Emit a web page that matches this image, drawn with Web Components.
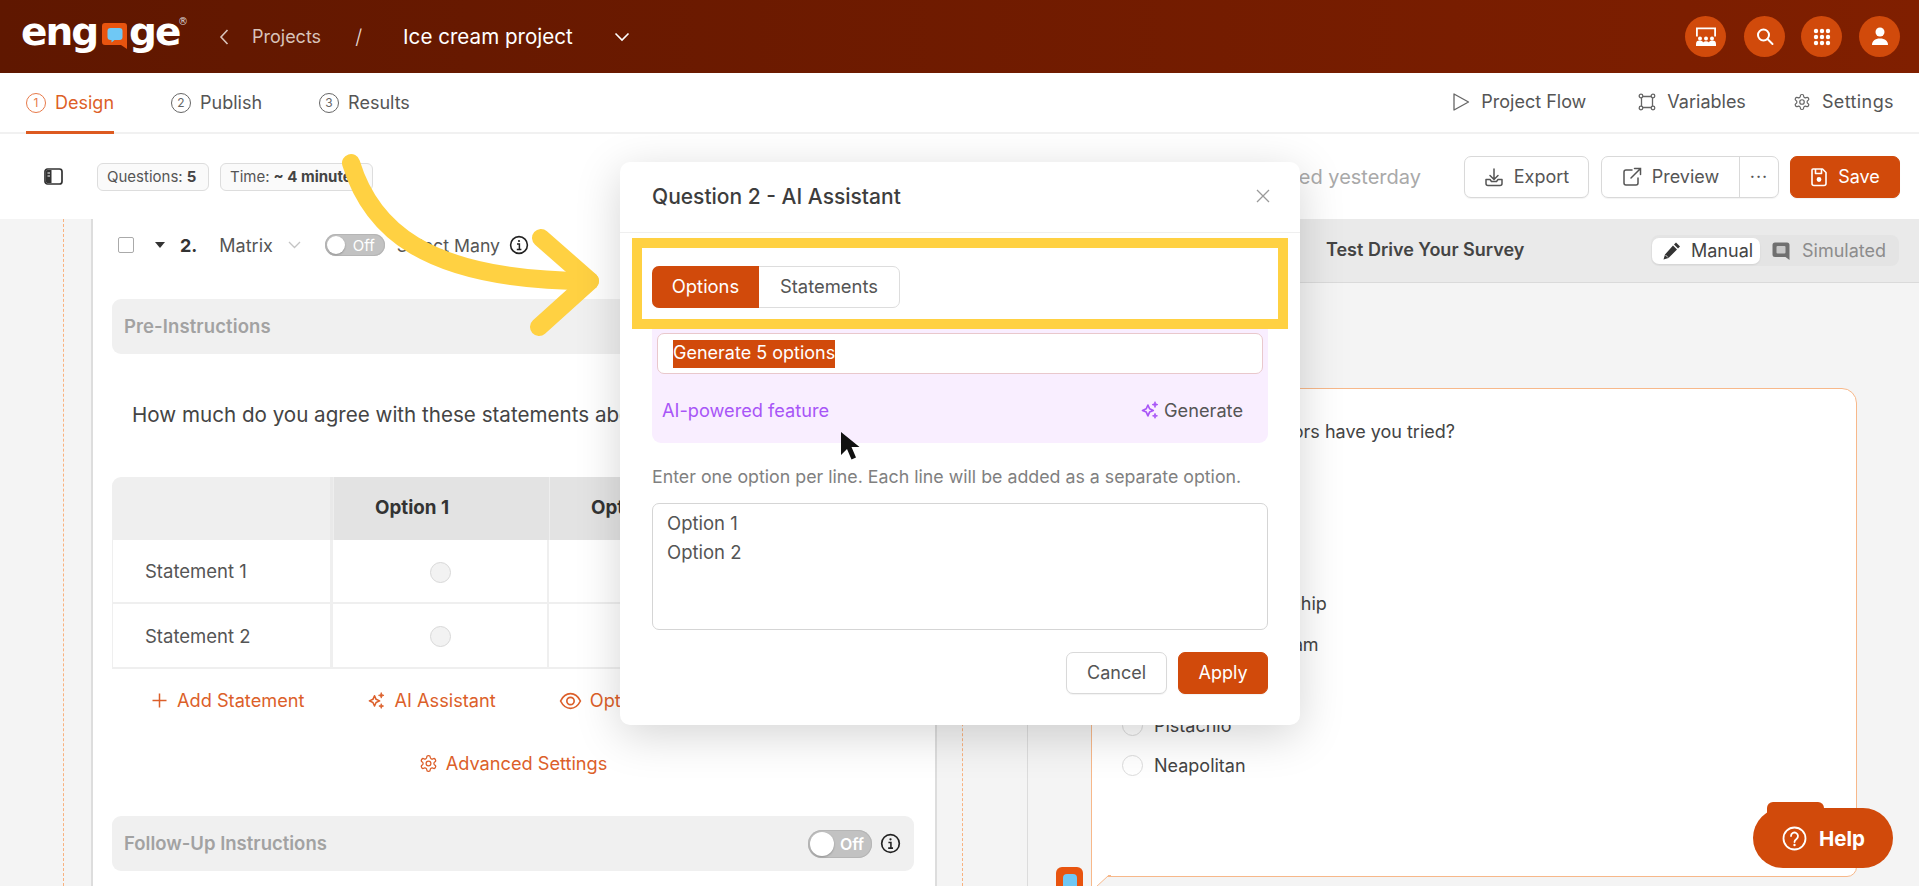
<!DOCTYPE html>
<html lang="en"><head><meta charset="utf-8"><title>Engage</title>
<style>
html,body{margin:0;padding:0;height:886px;overflow:hidden;font-family:Inter,"Noto Sans",sans-serif;color:#444;background:#f4f4f4}
eng-app{height:886px}
</style></head><body>
<eng-app></eng-app>
<script>
const I={
 gear:'<svg viewBox="0 0 24 24" width="100%" height="100%" fill="none" stroke="currentColor" stroke-width="1.6" stroke-linejoin="round"><path d="M12.22 2h-.44a2 2 0 0 0-2 2v.18a2 2 0 0 1-1 1.73l-.43.25a2 2 0 0 1-2 0l-.15-.08a2 2 0 0 0-2.73.73l-.22.38a2 2 0 0 0 .73 2.73l.15.1a2 2 0 0 1 1 1.72v.51a2 2 0 0 1-1 1.74l-.15.09a2 2 0 0 0-.73 2.73l.22.38a2 2 0 0 0 2.73.73l.15-.08a2 2 0 0 1 2 0l.43.25a2 2 0 0 1 1 1.73V20a2 2 0 0 0 2 2h.44a2 2 0 0 0 2-2v-.18a2 2 0 0 1 1-1.73l.43-.25a2 2 0 0 1 2 0l.15.08a2 2 0 0 0 2.73-.73l.22-.39a2 2 0 0 0-.73-2.73l-.15-.08a2 2 0 0 1-1-1.74v-.5a2 2 0 0 1 1-1.74l.15-.09a2 2 0 0 0 .73-2.73l-.22-.38a2 2 0 0 0-2.73-.73l-.15.08a2 2 0 0 1-2 0l-.43-.25a2 2 0 0 1-1-1.73V4a2 2 0 0 0-2-2z"/><circle cx="12" cy="12" r="3"/></svg>',
 spark:'<svg viewBox="0 0 24 24" width="100%" height="100%" fill="none" stroke="currentColor" stroke-width="2" stroke-linejoin="round"><path d="M9.5 6l2 4.5 4.5 2-4.5 2-2 4.5-2-4.5-4.5-2 4.5-2z"/><path fill="currentColor" stroke-width="1" d="M18 2l.9 2.6 2.6.9-2.6.9L18 9l-.9-2.6-2.6-.9 2.6-.9zM18 16l.8 2.2 2.2.8-2.2.8L18 22l-.8-2.2-2.2-.8 2.2-.8z"/></svg>',
 info:'<svg viewBox="0 0 20 20" width="100%" height="100%" fill="none" stroke="#222" stroke-width="1.6"><circle cx="10" cy="10" r="8.4"/><path d="M8 9h2.4v5M7.8 14.4h4.6" stroke-width="1.5"/><circle cx="10" cy="6" r="1.1" fill="#222" stroke="none"/></svg>'
};
function def(name,css,html){
 customElements.define(name,class extends HTMLElement{
  constructor(){super();this.attachShadow({mode:'open'}).innerHTML='<style>'+css+'</style>'+(typeof html==='function'?html(this):html);}
 });
}
def('eng-toggle',`:host{display:inline-flex;align-items:center;width:var(--w,60px);height:var(--h,26px);border-radius:14px;background:#c2c2c2;box-sizing:border-box;padding:2px;box-shadow:inset 0 0 0 1px #b5b5b5;color:#fff;font-size:16px}
 i{width:calc(var(--h,26px) - 4px);height:calc(var(--h,26px) - 4px);border-radius:50%;background:#fff;flex:none;box-shadow:0 1px 2px rgba(0,0,0,.25)}
 span{flex:1;text-align:center;line-height:1}`,`<i></i><span>Off</span>`);
def('eng-radio',`:host{display:inline-block;width:21px;height:21px;border-radius:50%;border:1px solid var(--b,#d8d8d8);background:var(--bg,#f2f2f2);box-sizing:border-box;flex:none}`,``);
def('eng-icobtn',`:host{display:flex;align-items:center;justify-content:center;width:41px;height:41px;border-radius:50%;background:#d14a0b;color:#fff}
 ::slotted(svg){display:block}`,`<slot></slot>`);
def('eng-logo',`:host{display:flex;align-items:flex-start;height:73px;color:#fff;font:700 39px/1 "DejaVu Sans",sans-serif;position:relative;width:170px;letter-spacing:-2px}
 .t{position:absolute;top:9px;line-height:46px}
 .b{position:absolute;left:81px;top:23px;width:25px;height:27px}
 sup{position:absolute;left:157px;top:15px;font:400 10px/14px "DejaVu Sans",sans-serif;letter-spacing:0;width:10px;height:14px;display:flex;align-items:center;justify-content:center;color:#ddd}`,
 `<span class="t" style="left:0">eng</span>
 <svg class="b" viewBox="0 0 25 27"><path d="M3 0h19a3 3 0 0 1 3 3v23l-6-4H3a3 3 0 0 1-3-3V3a3 3 0 0 1 3-3z" fill="#e8540f"/><path d="M8.500 5h9a3 3 0 0 1 3 3v6a3 3 0 0 1-3 3h-5l-3 2.500V17h-1a3 3 0 0 1-3-3V8a3 3 0 0 1 3-3z" fill="#6fc8f5"/></svg>
 <span class="t" style="left:108px">ge</span><sup>®</sup>`);
def('eng-header',`:host{display:flex;align-items:center;height:73px;flex:none;background:linear-gradient(90deg,#5f1700,#801f00);color:#fff;padding:0 19px 0 21px;box-sizing:border-box}
 eng-logo{margin-right:27px}
 .c{margin-right:22px;display:block}
 .p{color:#d8c3ba;font-size:18px}
 .s{color:#e8dcd6;font-size:20px;margin:0 41px 0 34px;font-weight:300}
 .n{font-size:20.6px;font-weight:400}
 .d{margin-left:41px;display:block}
 .sp{flex:1}
 .r{display:flex;gap:17px}`,
 `<eng-logo></eng-logo>
 <svg class="c" width="12" height="20" viewBox="0 0 12 20" fill="none" stroke="#d8c3ba" stroke-width="1.6"><path d="M9.5 3L3 10l6.5 7"/></svg>
 <span class="p">Projects</span><span class="s">/</span><span class="n">Ice cream project</span>
 <svg class="d" width="16" height="10" viewBox="0 0 16 10" fill="none" stroke="#fff" stroke-width="1.6"><path d="M1.5 1.5L8 8l6.5-6.5"/></svg>
 <span class="sp"></span>
 <div class="r">
 <eng-icobtn><svg width="24" height="24" viewBox="0 0 24 24" fill="#fff"><path d="M2 2.5h20v9h-1.800V4.300H3.800v7.200H2z"/><circle cx="6" cy="13.500" r="2"/><circle cx="12" cy="13.500" r="2"/><circle cx="18" cy="13.500" r="2"/><path d="M2 19a3 2.800 0 0 1 7.300 0v2H2zM8.700 19a3.300 2.800 0 0 1 6.600 0v2H8.700zM14.700 19a3 2.800 0 0 1 7.300 0v2h-7.300z"/></svg></eng-icobtn>
 <eng-icobtn style="margin-left:1px"><svg width="20" height="20" viewBox="0 0 20 20" fill="none" stroke="#fff" stroke-width="2"><circle cx="8.500" cy="8" r="5.500"/><path d="M12.500 12l5 5" stroke-linecap="round"/></svg></eng-icobtn>
 <eng-icobtn style="margin-left:-1px"><svg width="18" height="18" viewBox="0 0 18 18" fill="#fff"><circle cx="3" cy="3" r="2.200"/><circle cx="9" cy="3" r="2.200"/><circle cx="15" cy="3" r="2.200"/><circle cx="3" cy="9" r="2.200"/><circle cx="9" cy="9" r="2.200"/><circle cx="15" cy="9" r="2.200"/><circle cx="3" cy="15" r="2.200"/><circle cx="9" cy="15" r="2.200"/><circle cx="15" cy="15" r="2.200"/></svg></eng-icobtn>
 <eng-icobtn><svg width="20" height="22" viewBox="0 0 20 22" fill="#fff"><circle cx="10" cy="6" r="4.500"/><path d="M2 19c0-4 3-6.500 8-6.500s8 2.500 8 6.500z"/></svg></eng-icobtn>
 </div>`);
def('eng-tab',`:host{display:flex;align-items:center;gap:9px;height:61px;box-sizing:border-box;font-size:18px;color:#555;position:relative;--c:#666}
 :host([active]){color:#dd5f27;--c:#e77a4a}
 :host([active])::after{content:"";position:absolute;left:0;right:0;bottom:-1px;height:3px;background:#dd5a20}
 b{display:flex;align-items:center;justify-content:center;width:18px;height:18px;border:1px solid var(--c);border-radius:50%;font-size:12px;font-weight:400;color:var(--c)}`,
 t=>`<b>${t.getAttribute('n')}</b><slot></slot>`);
def('eng-link',`:host{display:flex;align-items:center;gap:11px;font-size:18px;color:#555}
 span{width:18px;height:18px;display:block;color:#666}`,t=>`<span><slot name="i"></slot></span><slot></slot>`);
def('eng-tabs',`:host{display:flex;align-items:center;height:61px;flex:none;background:#fff;border-bottom:2px solid #f1f1f1;padding:0 25px 0 26px;position:relative;z-index:1;box-sizing:border-box}
 .l{display:flex;gap:57px}.sp{flex:1}.r{display:flex;margin-top:-2px}`,
 `<div class="l"><eng-tab n="1" active>Design</eng-tab><eng-tab n="2">Publish</eng-tab><eng-tab n="3">Results</eng-tab></div><span class="sp"></span>
 <div class="r">
 <eng-link style="margin-right:52px"><svg slot="i" viewBox="0 0 18 18" width="18" height="18" fill="none" stroke="currentColor" stroke-width="1.300" stroke-linejoin="round"><path d="M2 1l14.500 8L2 17z"/></svg>Project Flow</eng-link>
 <eng-link style="margin-right:47px"><svg slot="i" viewBox="0 0 18 18" width="18" height="18" fill="none" stroke="currentColor" stroke-width="1.300"><path d="M3.500 3.500h11v11h-11z"/><circle cx="3" cy="3" r="1.800" fill="#fff"/><circle cx="15" cy="3" r="1.800" fill="#fff"/><circle cx="3" cy="15" r="1.800" fill="#fff"/><circle cx="15" cy="15" r="1.800" fill="#fff"/></svg>Variables</eng-link>
 <eng-link style="letter-spacing:.4px"><span slot="i">${I.gear}</span>Settings</eng-link>
 </div>`);
def('eng-chip',`:host{display:inline-flex;align-items:center;height:28px;padding:0 9px;border:1px solid #ddd;border-radius:6px;background:#fafafa;font-size:15px;color:#555;box-sizing:border-box;white-space:nowrap;overflow:hidden}
 ::slotted(b){font-weight:700;color:#444;margin-left:4px}`,`<slot></slot>`);
def('eng-btn',`:host{display:inline-flex;align-items:center;justify-content:center;gap:10px;height:42px;border:1px solid #d9d9d9;border-radius:7px;background:#fff;font-size:18px;color:#555;box-sizing:border-box;padding:0 12px;box-shadow:0 1px 1px rgba(0,0,0,.05)}
 :host([primary]){background:#d14a0b;border-color:#d14a0b;color:#fff}
 ::slotted(svg){display:block;flex:none}`,`<slot></slot>`);
def('eng-toolbar',`:host{display:flex;align-items:center;height:85px;flex:none;background:#fff;padding:0 19px 0 44px;box-sizing:border-box}
 svg.side{display:block;margin-right:34px}
 .chips{display:flex;gap:11px}
 .sp{flex:1}
 .saved{color:#a9a9a9;font-size:20px;margin-right:43px}
 .r{display:flex;gap:12px;align-items:center}
 .pv{display:flex;width:178px;border:1px solid #d9d9d9;border-radius:7px;height:42px;box-sizing:border-box;font-size:18px;color:#555;box-shadow:0 1px 1px rgba(0,0,0,.05)}
 .pv div{display:flex;align-items:center;gap:10px;width:137px;justify-content:center;border-right:1px solid #d9d9d9}
 .pv span{flex:1;display:flex;align-items:center;justify-content:center;letter-spacing:1px}`,
 `<svg class="side" width="19" height="17" viewBox="0 0 19 17" fill="none"><rect x="1" y="1" width="17" height="15" rx="2.500" stroke="#333" stroke-width="1.700"/><path d="M3 2h4.500v13H3a1.500 1.500 0 0 1-1-1V3a1 1 0 0 1 1-1z" fill="#333"/><path d="M3.500 5h2.500M3.500 8h2.500" stroke="#fff"/></svg>
 <div class="chips"><eng-chip style="width:112px">Questions: <b>5</b></eng-chip><eng-chip style="width:153px">Time: <b>~ 4 minutes</b></eng-chip></div>
 <span class="sp"></span><span class="saved">Last saved yesterday</span>
 <div class="r">
 <eng-btn style="width:125px"><svg width="20" height="20" viewBox="0 0 20 20" fill="none" stroke="#555" stroke-width="1.500" stroke-linecap="round" stroke-linejoin="round"><path d="M10 2v10M6 8.500l4 4 4-4M2 12.500v4a2 2 0 0 0 2 2h12a2 2 0 0 0 2-2v-4h-4l-1.500 2h-5L6 12.500z"/></svg>Export</eng-btn>
 <div class="pv"><div><svg width="20" height="20" viewBox="0 0 20 20" fill="none" stroke="#555" stroke-width="1.500" stroke-linecap="round"><path d="M10 3H4a2 2 0 0 0-2 2v11a2 2 0 0 0 2 2h10a2 2 0 0 0 2-2v-5M12.500 1.500H18.500V7.500M18 2L9 11"/></svg>Preview</div><span>···</span></div>
 <eng-btn primary style="width:110px;margin-left:-1px"><svg width="18" height="20" viewBox="0 0 18 20" fill="none" stroke="#fff" stroke-width="1.600" stroke-linejoin="round"><path d="M3 2h9.500L16 5.500V16.500a2 2 0 0 1-2 2H4a2 2 0 0 1-2-2V3a1 1 0 0 1 1-1z"/><path d="M5.500 2v4.500h6V2"/><circle cx="9" cy="12.500" r="1.600" fill="#fff"/></svg>Save</eng-btn>
 </div>`);
def('eng-instr',`:host{display:flex;align-items:center;height:55px;border-radius:9px;background:#f0f0f0;padding:0 12px;box-sizing:border-box;color:#a2a2a2;font-weight:600;font-size:18.5px}
 .sp{flex:1}
 .t{position:relative;top:-1px}
 ::slotted(*){flex:none}`,`<span class="t"><slot></slot></span><span class="sp"></span><slot name="r"></slot>`);
def('eng-matrix',`:host{display:grid;grid-template-columns:221px 216px 1fr;grid-template-rows:63px 64px 65px;font-size:18.5px;color:#555;box-sizing:border-box}
 .h{background:#e3e3e3;display:flex;align-items:center;padding-left:41px;font-weight:700;font-size:18.8px;color:#333;border-left:1px solid #eee;padding-bottom:2px;box-sizing:border-box}
 .h0{background:#efefef;border-radius:9px 0 0 0;border-right:3px solid #e9e9e9;}
 .c{display:flex;align-items:center;justify-content:center;border-bottom:2px solid #efefef;border-right:2px solid #efefef;box-sizing:border-box}
 .c eng-radio{margin-top:2px}
 .s{justify-content:flex-start;padding-left:32px;border-left:1px solid #efefef;border-right:3px solid #efefef}`,
 `<div class="h0"></div><div class="h">Option 1</div><div class="h">Option 2</div>
 <div class="c s">Statement 1</div><div class="c"><eng-radio></eng-radio></div><div class="c"><eng-radio></eng-radio></div>
 <div class="c s">Statement 2</div><div class="c"><eng-radio></eng-radio></div><div class="c"><eng-radio></eng-radio></div>`);
def('eng-action',`:host{display:inline-flex;align-items:center;gap:8px;color:#dc5f2a;font-size:18.2px;height:24px;white-space:nowrap}
 span{display:block;min-width:19px;height:19px}`,`<span><slot name="i"></slot></span><slot></slot>`);
def('eng-editor',`:host{display:block;width:1027px;height:667px;flex:none;box-sizing:border-box;padding-left:63px;overflow:hidden}
 .d{height:100%;width:900px;box-sizing:border-box;border-left:1px dashed #f9b27f;border-right:1px dashed #f9b27f;padding:0 27px}
 .card{height:100%;background:#fff;border-left:2px solid #ddd;border-right:2px solid #ddd;padding:0 21px 0 19px;box-sizing:border-box;width:846px}
 .row{display:flex;align-items:center;height:52px;margin-bottom:28px;font-size:18px;color:#555}
 .cb{width:14px;height:14px;border:1.5px solid #aaa;border-radius:2px;margin:0 0 0 6px}
 .car{width:0;height:0;border:5px solid transparent;border-top:6px solid #333;border-bottom:0;margin:0 15px 0 21px}
 .row b{font-size:18px;color:#333;margin-right:22px}
 .q{font-size:20.6px;color:#444;height:28px;line-height:28px;margin:47px 0 48px;padding-left:20px;white-space:nowrap}
 .acts{display:flex;gap:63px;padding-left:38px;margin-top:19px;overflow:hidden}
 .adv{display:flex;justify-content:center;margin:39px 0 41px}`,
 `<div class="d"><div class="card">
 <div class="row"><span class="cb"></span><span class="car"></span><b>2.</b><span>Matrix</span>
 <svg style="margin:0 24px 0 15px" width="13" height="8" viewBox="0 0 13 8" fill="none" stroke="#c4c4c4" stroke-width="1.300"><path d="M1 1l5.500 5.500L12 1"/></svg>
 <eng-toggle style="--w:60px;--h:22px;font-size:15px"></eng-toggle><span style="margin:0 9px 0 12px;font-size:17.7px">Select Many</span><span style="width:20px;height:20px;display:block">${I.info}</span></div>
 <eng-instr style="letter-spacing:.1px">Pre-Instructions</eng-instr>
 <div class="q">How much do you agree with these statements about ice cream?</div>
 <eng-matrix></eng-matrix>
 <div class="acts">
 <eng-action><svg slot="i" viewBox="0 0 19 19" width="19" height="19" fill="none" stroke="currentColor" stroke-width="1.500"><path d="M9.500 2.500v14M2.500 9.500h14"/></svg>Add Statement</eng-action>
 <eng-action><span slot="i" style="display:block;width:19px;height:19px">${I.spark}</span>AI Assistant</eng-action>
 <eng-action><svg slot="i" viewBox="0 0 22 19" width="23" height="20" fill="none" stroke="currentColor" stroke-width="1.600"><path d="M1.500 9.500C4 4.500 7.500 2.500 11 2.500s7 2 9.500 7c-2.500 5-6 7-9.500 7s-7-2-9.500-7z"/><circle cx="11" cy="9.500" r="3.500"/></svg>Options</eng-action>
 </div>
 <div class="adv"><eng-action><span slot="i" style="display:block;width:19px;height:19px">${I.gear}</span>Advanced Settings</eng-action></div>
 <eng-instr>Follow-Up Instructions<eng-toggle slot="r" style="--w:64px;--h:28px;margin-right:8px"></eng-toggle><span slot="r" style="display:block;width:21px;height:21px;margin-right:1px">${I.info}</span></eng-instr>
 </div></div>`);
def('eng-seg',`:host{display:flex;align-items:center;background:#e4e4e4;border-radius:8px;height:31px;width:248px;padding:0 0 0 1px;font-size:18px;color:#8c8c8c;box-sizing:border-box}
 .on{display:flex;align-items:center;gap:9px;background:#fff;color:#444;height:26px;width:108px;box-sizing:border-box;padding-left:10px;border-radius:7px;margin-right:11px;box-shadow:0 1px 2px rgba(0,0,0,.08)}
 .off{display:flex;align-items:center;gap:11px}
 svg{display:block}`,
 `<div class="on"><svg width="20" height="20" viewBox="0 0 20 20" fill="#333"><path d="M14 1.500l4 4-2 2-4-4zM11 4.500l4 4L6.500 17 1.500 18.500 3 13.500z"/><path d="M3.500 14l2.500 2.500" stroke="#fff" stroke-width=".8"/></svg>Manual</div>
 <div class="off"><svg width="20" height="20" viewBox="0 0 20 20"><path d="M4 1.500h12A2.500 2.500 0 0 1 18.500 4v15L14.500 16H4A2.500 2.500 0 0 1 1.500 13.500V4A2.500 2.500 0 0 1 4 1.500z" fill="#707070"/><rect x="5.500" y="5" width="9" height="7.500" rx="1" fill="#c8c8c8"/></svg>Simulated</div>`);
def('eng-bubble',`:host{display:block;position:relative;width:766px;height:489px;box-sizing:border-box;background:#fff;border:1px solid #f7b88a;border-radius:15px 15px 10px 0;font-size:18px;color:#444}
 ul{list-style:none;margin:0;padding:0;position:absolute;left:30px;top:73px}
 li{display:flex;align-items:center;gap:11px;height:40.5px}
 eng-radio{--bg:#fff;--b:#dcdcdc}
 .qq{position:absolute;right:401px;top:30px;line-height:26px;white-space:nowrap}
 .tail{position:absolute;left:-1px;bottom:-11px;display:block}`,
 `<div class="qq">Which ice cream flavors have you tried?</div>
 <ul><li><eng-radio></eng-radio>Vanilla</li><li><eng-radio></eng-radio>Chocolate</li><li><eng-radio></eng-radio>Strawberry</li><li><eng-radio></eng-radio>Mint Chocolate Chip</li><li style="letter-spacing:-.15px"><eng-radio></eng-radio>Cookies and Cream</li><li><eng-radio></eng-radio>Butter Pecan</li><li><eng-radio></eng-radio>Pistachio</li><li><eng-radio></eng-radio>Neapolitan</li></ul>
 <svg class="tail" width="20" height="12" viewBox="0 0 20 12"><path d="M0 0H18L5 12H0z" fill="#fff"/><path d="M.5 0V12M17.500 0.500L5 12M17 .5H20" fill="none" stroke="#f7b88a"/></svg>`);
def('eng-preview',`:host{display:block;flex:1;min-width:0;height:667px;border-left:1px solid #dcdcdc;box-sizing:border-box;position:relative;overflow:hidden}
 .band{display:flex;align-items:center;height:64px;background:#eaeaea;border-bottom:1px solid #dadada;box-sizing:border-box;padding:0 20px 0 298px}
 .t{font-weight:600;font-size:18px;color:#444;position:relative;top:-1px}
 .sp{flex:1}
 .body{padding:105px 0 0 63px}
 .av{position:absolute;left:28px;top:648px;width:27px;height:30px;border-radius:6px;background:#e8540f;display:flex;justify-content:center;padding-top:7px;box-sizing:border-box}
 .av i{display:block;width:14px;height:20px;border-radius:4px;background:#6fc8f5}`,
 `<div class="band"><span class="t">Test Drive Your Survey</span><span class="sp"></span><eng-seg></eng-seg></div>
 <div class="body"><eng-bubble></eng-bubble></div>
 <div class="av"><i></i></div>`);
def('eng-help',`:host{position:absolute;left:1753px;top:808px;width:140px;height:60px;border-radius:30px;background:#d14a0b;color:#fff;display:flex;align-items:center;gap:12px;padding-left:29px;box-sizing:border-box;font-weight:700;font-size:20.5px}
 :host::before{content:"";position:absolute;left:14px;top:-6px;width:57px;height:24px;border-radius:6px 6px 0 0;background:#d14a0b}
 svg,span{position:relative;display:block}`,
 `<svg width="25" height="25" viewBox="0 0 25 25" fill="none" stroke="#fff" stroke-width="1.800"><circle cx="12.500" cy="12.500" r="11"/><path d="M9 10a3.500 3.500 0 1 1 5.500 2.900c-1.300.9-2 1.500-2 3.100" stroke-linecap="round"/><circle cx="12.500" cy="19" r="1.200" fill="#fff" stroke="none"/></svg><span>Help</span>`);
def('eng-modal',`:host{position:absolute;left:620px;top:162px;width:680px;height:563px;background:#fff;border-radius:10px;box-shadow:0 10px 45px rgba(0,0,0,.17);box-sizing:border-box;display:block;color:#444}
 header{display:flex;align-items:center;justify-content:space-between;height:71px;box-sizing:border-box;border-bottom:1px solid #efefef;padding:0 30px 2px 32px;font-weight:500;font-size:21px;color:#3d3d3d}
 .main{padding:33px 32px 0}
 .tabs{display:flex;height:42px;width:248px;box-sizing:border-box;border:1px solid #ddd;border-radius:7px;font-size:18.4px}
 .tabs b{font-weight:400;width:107px;margin:-1px 0 -1px -1px;padding-bottom:3px;box-sizing:border-box;background:#d14a0b;color:#fff;border-radius:7px 0 0 7px;display:flex;align-items:center;justify-content:center}
 .tabs span{flex:1;display:flex;align-items:center;justify-content:center;color:#555;padding-bottom:3px}
 .ai{margin-top:13px;background:#f9eeff;border-radius:9px;height:122px;box-sizing:border-box;padding:12px 5px 0}
 .inp{height:41px;border:1px solid #e9c8cc;border-radius:7px;background:#fff;box-sizing:border-box;padding-left:15px;display:flex;align-items:center;font-size:18px}
 .inp mark{background:#d14a0b;color:#fff;height:28px;line-height:26px;display:block}
 .foot{display:flex;align-items:center;justify-content:space-between;height:69px;padding:3px 20px 0 5px;font-size:18.2px;box-sizing:border-box}
 .foot .p{color:#a855f7}
 .foot .g{display:flex;align-items:center;gap:4px;color:#555}
 .foot svg,.foot i{display:block}
 .hint{color:#808080;font-size:17.8px;height:24px;line-height:22px;margin:23px 0 13px;white-space:nowrap}
 .ta{height:127px;border:1px solid #d5d5d5;border-radius:7px;box-sizing:border-box;padding:5px 14px;font-size:18.5px;line-height:29px;color:#555}
 .btns{display:flex;justify-content:flex-end;gap:11px;margin-top:22px}
 .btns eng-btn{padding-bottom:2px}
 .y{position:absolute;left:12px;top:76px;width:656px;height:91px;border:10px solid #ffd142;box-sizing:border-box;pointer-events:none}
 .cur{position:absolute;left:220px;top:270px;display:block}`,
 `<header><span>Question 2 - AI Assistant</span><svg width="14" height="14" viewBox="0 0 14 14" fill="none" stroke="#9a9a9a" stroke-width="1.300"><path d="M1 1l12 12M13 1L1 13"/></svg></header>
 <div class="main">
 <div class="tabs"><b>Options</b><span>Statements</span></div>
 <div class="ai"><div class="inp"><mark>Generate 5 options</mark></div>
 <div class="foot"><span class="p">AI-powered feature</span><span class="g"><i style="width:20px;height:20px;color:#a855f7">${I.spark}</i>Generate</span></div></div>
 <div class="hint">Enter one option per line. Each line will be added as a separate option.</div>
 <div class="ta">Option 1<br>Option 2</div>
 <div class="btns"><eng-btn style="width:101px">Cancel</eng-btn><eng-btn primary style="width:90px">Apply</eng-btn></div>
 </div>
 <div class="y"></div>
 <svg class="cur" width="20" height="28" viewBox="0 0 20 28"><path d="M1 0v23l6-6 4.500 10.500 4.500-2L11.500 15H19.500z" fill="#111"/></svg>`);
def('eng-arrow',`:host{position:absolute;left:0;top:0;width:1919px;height:886px;pointer-events:none;display:block}
 svg{display:block}`,
 `<svg width="1919" height="886" viewBox="0 0 1919 886" fill="none" stroke="#ffd142" stroke-width="18" stroke-linecap="round" stroke-linejoin="round"><path d="M351 163C370 225 420 281 590 281"/><path d="M541 238L590 281L539 327"/></svg>`);
def('eng-app',`:host{display:flex;flex-direction:column;position:relative;width:1919px;height:886px;overflow:hidden;background:#f4f4f4}
 .main{display:flex;flex:1;min-height:0}`,
 `<eng-header></eng-header><eng-tabs></eng-tabs><eng-toolbar></eng-toolbar>
 <div class="main"><eng-editor></eng-editor><eng-preview></eng-preview></div>
 <eng-help></eng-help><eng-arrow></eng-arrow><eng-modal></eng-modal>`);
</script></body></html>
